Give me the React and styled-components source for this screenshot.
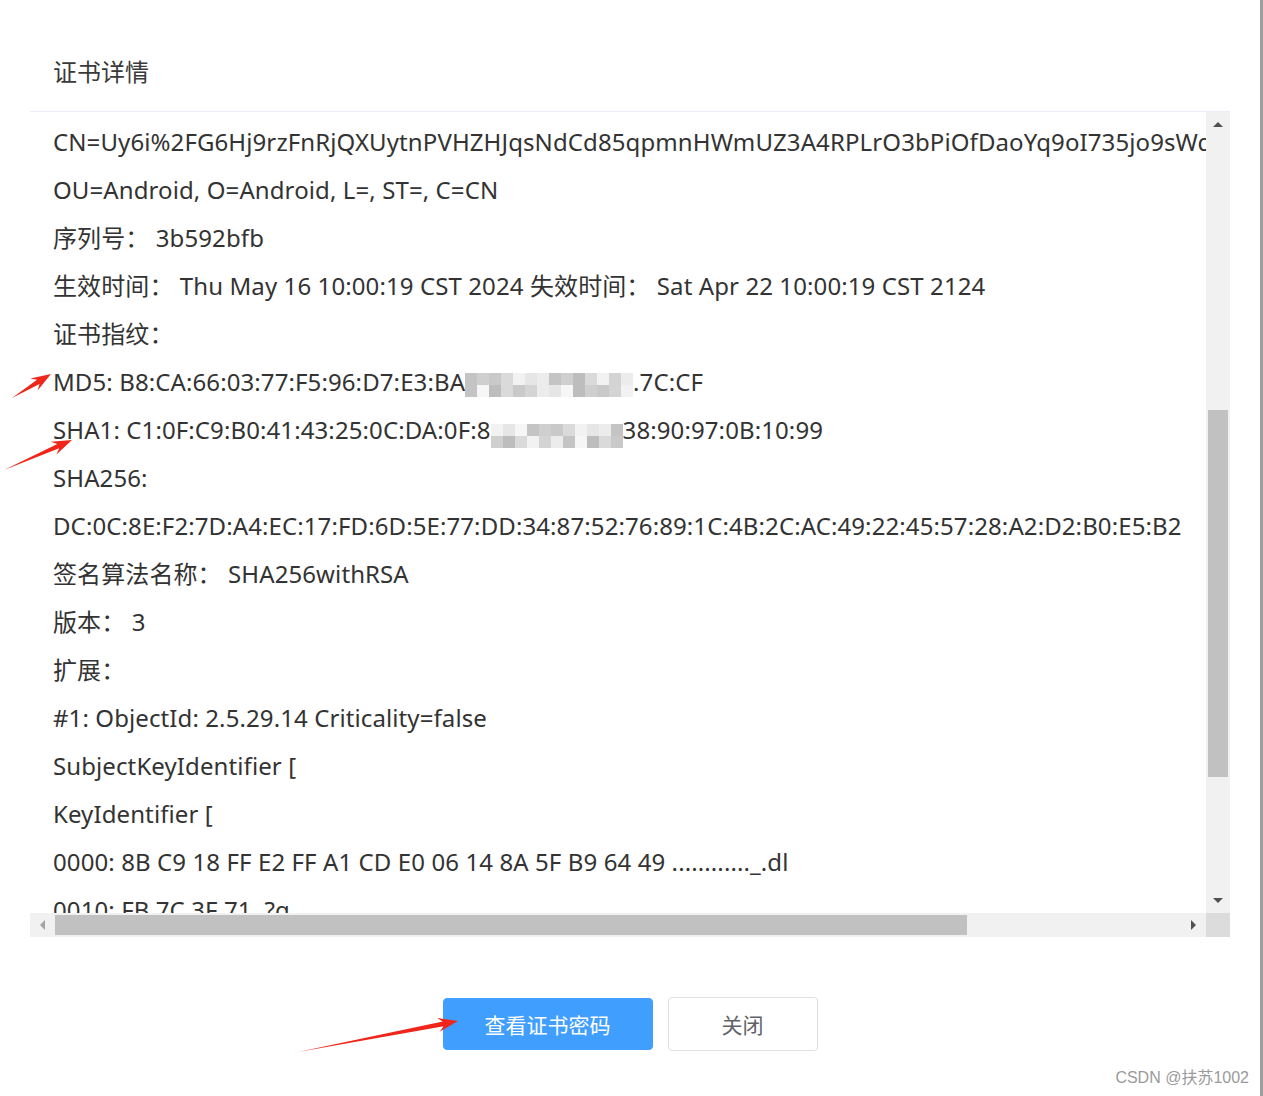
import React from 'react'
import styled, { createGlobalStyle } from 'styled-components'

const GlobalStyle = createGlobalStyle`
  html, body {
    margin: 0;
    padding: 0;
    background: #fff;
  }
  body {
    font-family: "Noto Sans", "Noto Sans CJK SC", sans-serif;
    color: #333;
  }
`

const Page = styled.div`
  position: relative;
  display: flex;
  width: 1263px;
  height: 1096px;
  overflow: hidden;
  background: #fff;
`

const Dialog = styled.div`
  display: flex;
  flex-direction: column;
  width: 1200px;
  padding-left: 30px;
  padding-right: 30px;
`

const Edge = styled.div`
  width: 3px;
  background: #9e9e9e;
`

const Header = styled.div`
  height: 112px;
  box-sizing: border-box;
  padding: 54px 0 0 23px;
  border-bottom: 1px solid #ebeef5;
  font-family: "Noto Sans CJK SC", sans-serif;
  font-size: 24px;
  line-height: 34px;
  color: #3a3a3a;
`

const ScrollBox = styled.div`
  display: grid;
  grid-template-columns: 1176px 24px;
  grid-template-rows: 801px 24px;
`

const Viewport = styled.div`
  overflow: hidden;
  padding: 6px 0 0 23px;
  box-sizing: border-box;
`

const Line = styled.div`
  font-size: 24px;
  line-height: 48px;
  letter-spacing: 0.1px;
  white-space: nowrap;
  color: #333;
`

const Mosaic = styled.span`
  display: inline-grid;
  grid-template-columns: repeat(${p => p.cols}, 12px);
  grid-auto-rows: 12px;
  vertical-align: middle;
  margin: ${p => p.offset}px 0 0 0;
`

const Cell = styled.span`
  background: ${p => p.shade};
`

const Track = styled.div`
  position: relative;
  display: flex;
  flex-direction: ${p => (p.vertical ? 'column' : 'row')};
  background: #f1f1f1;
`

const ArrowButton = styled.div`
  flex: 0 0 25px;
  display: flex;
  align-items: center;
  justify-content: center;
`

const TrackSpace = styled.div`
  flex: 1;
  display: flex;
  flex-direction: ${p => (p.vertical ? 'column' : 'row')};
  padding: ${p => (p.vertical ? '0 2px' : '2px 0')};
`

const Thumb = styled.div`
  background: #c1c1c1;
  flex: 0 0 ${p => p.size}px;
  margin-${p => (p.vertical ? 'top' : 'left')}: ${p => p.offset}px;
`

const Corner = styled.div`
  background: #dcdcdc;
`

const Footer = styled.div`
  display: flex;
  justify-content: center;
  align-items: center;
  gap: 15px;
  padding-top: 60px;
`

const Button = styled.button`
  box-sizing: border-box;
  height: ${p => (p.primary ? 52 : 54)}px;
  width: ${p => (p.primary ? 210 : 150)}px;
  border-radius: 4px;
  border: 1px solid ${p => (p.primary ? '#409eff' : '#dcdfe6')};
  background: ${p => (p.primary ? '#409eff' : '#fff')};
  color: ${p => (p.primary ? '#fff' : '#606266')};
  font-family: "Noto Sans CJK SC", sans-serif;
  font-size: 21px;
  padding: 0;
`

const Watermark = styled.div`
  position: absolute;
  right: 14px;
  bottom: 8px;
  font-family: "Liberation Sans", "Noto Sans CJK SC", sans-serif;
  font-size: 16px;
  color: #9a9a9a;
`

const Overlay = styled.svg`
  position: absolute;
  left: 0;
  top: 0;
  pointer-events: none;
`

const shades = ['#e6e6e6', '#cfcfcf', '#f2f2f2', '#c4c4c4', '#dadada', '#ececec', '#bdbdbd', '#d4d4d4', '#f6f6f6', '#c9c9c9']

function MosaicBlock({ cols, rows, seed, offset = 0 }) {
  const cells = []
  for (let i = 0; i < cols * rows; i++) {
    cells.push(<Cell key={i} shade={shades[(i * 7 + seed * 3 + (i % 3)) % shades.length]} />)
  }
  return <Mosaic cols={cols} offset={offset}>{cells}</Mosaic>
}

function arrowPoints(x1, y1, x2, y2) {
  const dx = x2 - x1
  const dy = y2 - y1
  const len = Math.hypot(dx, dy)
  const ux = dx / len
  const uy = dy / len
  const nx = -uy
  const ny = ux
  const head = 20
  const hw = 7
  const sw = 2.4
  const bx = x2 - ux * head
  const by = y2 - uy * head
  const ix = x2 - ux * head * 0.75
  const iy = y2 - uy * head * 0.75
  const p = [
    [x1, y1],
    [ix + nx * sw, iy + ny * sw],
    [bx + nx * hw, by + ny * hw],
    [x2, y2],
    [bx - nx * hw, by - ny * hw],
    [ix - nx * sw, iy - ny * sw]
  ]
  return p.map(q => q[0].toFixed(1) + ',' + q[1].toFixed(1)).join(' ')
}

const Tri = ({ dir, color }) => {
  const pts = {
    up: '0,5 5,0 10,5',
    down: '0,0 10,0 5,5',
    left: '5,0 5,10 0,5',
    right: '0,0 0,10 5,5'
  }[dir]
  const vertical = dir === 'up' || dir === 'down'
  return (
    <svg width={vertical ? 10 : 5} height={vertical ? 5 : 10}>
      <polygon points={pts} fill={color} />
    </svg>
  )
}

export default function App() {
  return (
    <Page>
      <GlobalStyle />
      <Dialog>
        <Header>证书详情</Header>
        <ScrollBox>
          <Viewport>
            <Line>CN=Uy6i%2FG6Hj9rzFnRjQXUytnPVHZHJqsNdCd85qpmnHWmUZ3A4RPLrO3bPiOfDaoYq9oI735jo9sWq3kLx, OU=Android</Line>
            <Line>OU=Android, O=Android, L=, ST=, C=CN</Line>
            <Line>序列号：&nbsp;3b592bfb</Line>
            <Line>生效时间：&nbsp;Thu May 16 10:00:19 CST 2024 失效时间：&nbsp;Sat Apr 22 10:00:19 CST 2124</Line>
            <Line>证书指纹：</Line>
            <Line>MD5: B8:CA:66:03:77:F5:96:D7:E3:BA<MosaicBlock cols={14} rows={2} seed={1} />.7C:CF</Line>
            <Line>SHA1: C1:0F:C9:B0:41:43:25:0C:DA:0F:8<MosaicBlock cols={11} rows={2} seed={4} offset={6} />38:90:97:0B:10:99</Line>
            <Line>SHA256:</Line>
            <Line>DC:0C:8E:F2:7D:A4:EC:17:FD:6D:5E:77:DD:34:87:52:76:89:1C:4B:2C:AC:49:22:45:57:28:A2:D2:B0:E5:B2</Line>
            <Line>签名算法名称：&nbsp;SHA256withRSA</Line>
            <Line>版本：&nbsp;3</Line>
            <Line>扩展：</Line>
            <Line>#1: ObjectId: 2.5.29.14 Criticality=false</Line>
            <Line>SubjectKeyIdentifier [</Line>
            <Line>KeyIdentifier [</Line>
            <Line>0000: 8B C9 18 FF E2 FF A1 CD E0 06 14 8A 5F B9 64 49 ............_.dl</Line>
            <Line>0010: FB 7C 3F 71 .?q</Line>
          </Viewport>
          <Track vertical>
            <ArrowButton><Tri dir="up" color="#505050" /></ArrowButton>
            <TrackSpace vertical>
              <Thumb vertical size={367} offset={273} />
            </TrackSpace>
            <ArrowButton><Tri dir="down" color="#505050" /></ArrowButton>
          </Track>
          <Track>
            <ArrowButton><Tri dir="left" color="#a3a3a3" /></ArrowButton>
            <TrackSpace>
              <Thumb size={912} offset={0} />
            </TrackSpace>
            <ArrowButton><Tri dir="right" color="#505050" /></ArrowButton>
          </Track>
          <Corner />
        </ScrollBox>
        <Footer>
          <Button primary>查看证书密码</Button>
          <Button>关闭</Button>
        </Footer>
      </Dialog>
      <Edge />
      <Watermark>CSDN @扶苏1002</Watermark>
      <Overlay width="1263" height="1096">
        <polygon points={arrowPoints(12, 398, 51, 374)} fill="#f0261b" />
        <polygon points={arrowPoints(4, 470, 72, 440)} fill="#f0261b" />
        <polygon points={arrowPoints(298, 1052, 458, 1021)} fill="#f0261b" />
      </Overlay>
    </Page>
  )
}
